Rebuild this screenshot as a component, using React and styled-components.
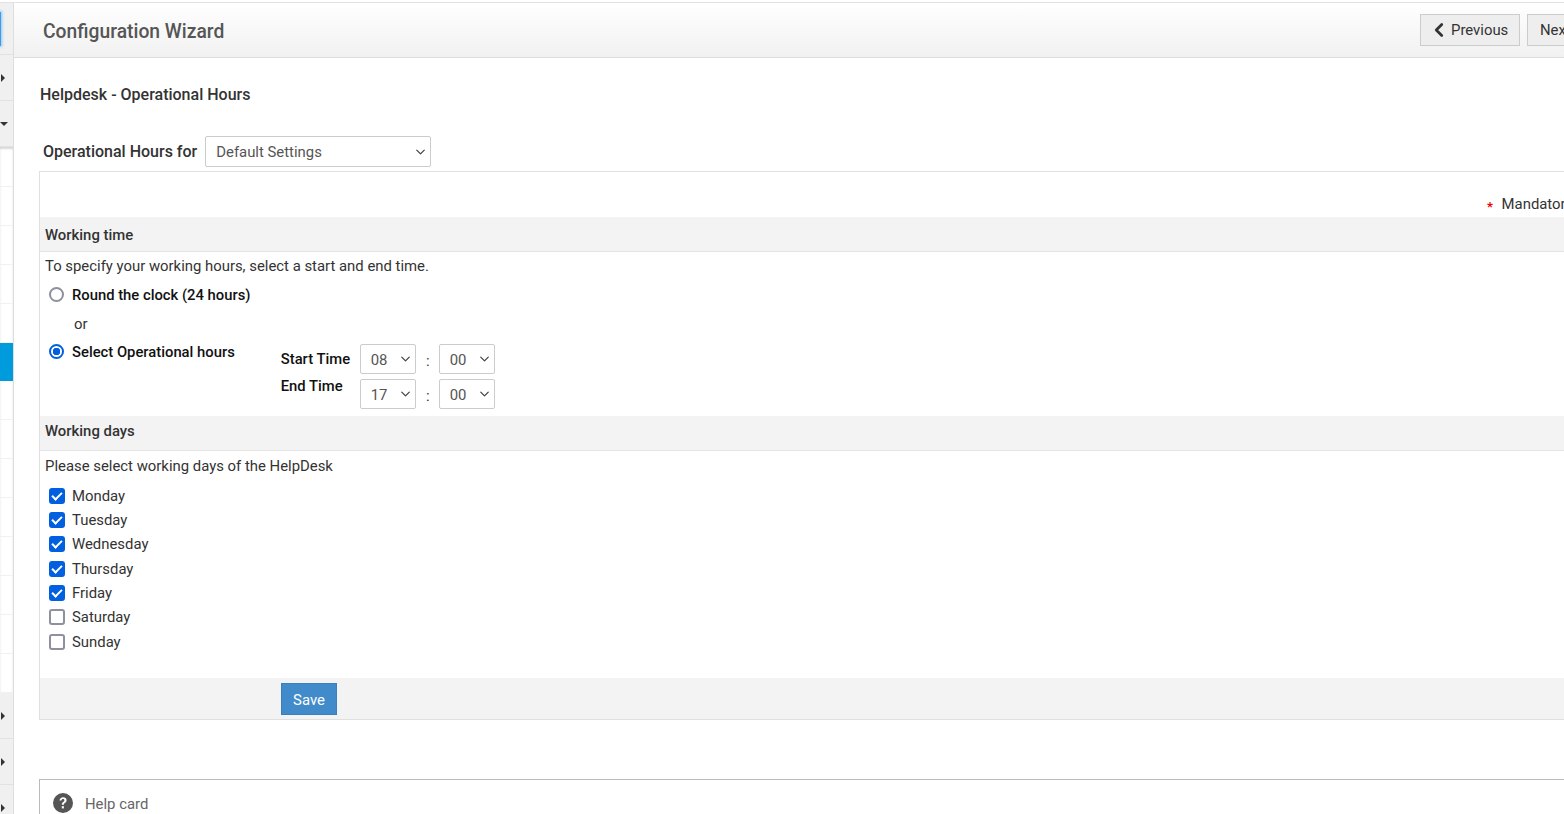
import React from 'react'
import styled, { createGlobalStyle } from 'styled-components'
import { ChevronDown, ChevronLeft } from 'lucide-react'

const GlobalStyle = createGlobalStyle`
  html, body {
    margin: 0;
    height: 100%;
    overflow: hidden;
    background: #fff;
  }
  body {
    font-family: Roboto, "Liberation Sans", sans-serif;
    font-size: 14.88px;
    color: #333;
  }
`

const days = [
  { name: 'Monday', on: true, after: 0 },
  { name: 'Tuesday', on: true, after: 0 },
  { name: 'Wednesday', on: true, after: 1 },
  { name: 'Thursday', on: true, after: 0 },
  { name: 'Friday', on: true, after: 0 },
  { name: 'Saturday', on: false, after: 1 },
  { name: 'Sunday', on: false, after: 0 },
]

const Picker = ({ value, wide }) => (
  <SelectWrap $wide={wide}>
    <Select defaultValue={value} $wide={wide}>
      <option>{value}</option>
    </Select>
    <Chevron><ChevronDown size={15} strokeWidth={2} /></Chevron>
  </SelectWrap>
)

const App = () => {
  return (
    <Page>
      <GlobalStyle />
      <Sidebar>
        <SideTop><Accent /></SideTop>
        <SideGrey><CaretRight /></SideGrey>
        <SideGrey><CaretDown /></SideGrey>
        <SideList>
          {Array.from({ length: 5 }).map((_, i) => <SideRow key={i} />)}
          <SideActive />
          {Array.from({ length: 8 }).map((_, i) => <SideRow key={i} />)}
        </SideList>
        <SideGrey><CaretRight /></SideGrey>
        <SideGrey><CaretRight /></SideGrey>
        <SideGrey><CaretRight /></SideGrey>
      </Sidebar>

      <Main>
        <Header>
          <Title>Configuration Wizard</Title>
          <HeaderButtons>
            <NavButton><ChevronLeft size={22} strokeWidth={3} /> Previous</NavButton>
            <NavButton $next>Next</NavButton>
          </HeaderButtons>
        </Header>

        <Content>
          <Heading>Helpdesk - Operational Hours</Heading>
          <ForRow>
            <ForLabel>Operational Hours for</ForLabel>
            <Picker value="Default Settings" wide />
          </ForRow>

          <Box>
            <MandatoryRow><Star>*</Star> Mandatory</MandatoryRow>

            <SectionHeader $line={37}>Working time</SectionHeader>
            <TimeBody>
              <Hint>To specify your working hours, select a start and end time.</Hint>
              <OptionRow>
                <Radio name="hours" />
                <RadioLabel>Round the clock (24 hours)</RadioLabel>
              </OptionRow>
              <Or>or</Or>
              <HoursRow>
                <OptionRow>
                  <Radio name="hours" defaultChecked />
                  <RadioLabel>Select Operational hours</RadioLabel>
                </OptionRow>
                <TimeGrid>
                  <TimeLabel>Start Time</TimeLabel>
                  <Picker value="08" />
                  <Colon>:</Colon>
                  <Picker value="00" />
                  <TimeLabel $end>End Time</TimeLabel>
                  <Picker value="17" />
                  <Colon>:</Colon>
                  <Picker value="00" />
                </TimeGrid>
              </HoursRow>
            </TimeBody>

            <SectionHeader $line={31}>Working days</SectionHeader>
            <DaysBody>
              <DaysHint>Please select working days of the HelpDesk</DaysHint>
              {days.map((d) => (
                <DayRow key={d.name} $after={d.after}>
                  <Check defaultChecked={d.on} />
                  <DayName>{d.name}</DayName>
                </DayRow>
              ))}
            </DaysBody>

            <SaveBar><SaveButton>Save</SaveButton></SaveBar>
          </Box>

          <HelpCard>
            <HelpIcon viewBox="0 0 20 20">
              <circle cx="10" cy="10" r="10" fill="#555" />
              <path d="M6.500 7.600c.1-2.100 1.600-3.400 3.600-3.400 2.100 0 3.500 1.300 3.500 3 0 1.300-.7 2-1.700 2.700-.8.5-1 .9-1 1.800H8.800c0-1.400.4-2.100 1.400-2.800.8-.5 1.200-.9 1.200-1.600 0-.8-.6-1.300-1.400-1.300-.9 0-1.500.6-1.600 1.600z" fill="#fff" />
              <rect x="8.800" y="13.200" width="2.100" height="2.200" fill="#fff" />
            </HelpIcon>
            <HelpText>Help card</HelpText>
          </HelpCard>
        </Content>
      </Main>
    </Page>
  )
}

const Page = styled.div`
  display: flex;
  width: 1564px;
  height: 812px;
  overflow: hidden;
  border-top: 1px solid #e2e2e2;
  margin-top: 2px;
  box-sizing: border-box;
`

const Sidebar = styled.div`
  width: 13px;
  flex: none;
  display: flex;
  flex-direction: column;
  border-right: 1px solid #dedede;
`

const SideTop = styled.div`
  height: 52px;
  flex: none;
  background: #f0f0f0;
  border-bottom: 1px solid #e2e2e2;
  box-sizing: border-box;
  padding-top: 9px;
`

const Accent = styled.div`
  width: 1px;
  height: 34px;
  background: #3d9be9;
  box-shadow: 0 0 3px 1px #8cc4f3;
`

const SideGrey = styled.div`
  height: 46px;
  flex: none;
  box-sizing: border-box;
  background: #f0f0f0;
  border-bottom: 1px solid #e2e2e2;
  display: flex;
  align-items: center;
`

const CaretRight = styled.span`
  width: 0;
  height: 0;
  border-top: 4px solid transparent;
  border-bottom: 4px solid transparent;
  border-left: 4px solid #333;
  margin-left: 1px;
`

const CaretDown = styled.span`
  width: 0;
  height: 0;
  border-left: 4px solid transparent;
  border-right: 4px solid transparent;
  border-top: 4px solid #333;
`

const SideList = styled.div`
  height: 546px;
  flex: none;
  box-sizing: border-box;
  padding-top: 1px;
  display: flex;
  flex-direction: column;
  box-shadow: inset 0 2px 2px #d8d8d8;
  overflow: hidden;
`

const SideRow = styled.div`
  height: 39px;
  flex: none;
  box-sizing: border-box;
  border-bottom: 1px solid #f1f1f1;
`

const SideActive = styled.div`
  height: 38px;
  flex: none;
  background: #009bdd;
`

const Main = styled.div`
  flex: 1;
  min-width: 0;
`

const Header = styled.div`
  height: 55px;
  box-sizing: border-box;
  display: flex;
  align-items: center;
  justify-content: space-between;
  padding-left: 29px;
  background: linear-gradient(#fff, #f1f1f1);
  border-bottom: 1px solid #dcdcdc;
`

const Title = styled.div`
  font-size: 19.3px;
  font-weight: 500;
  color: #555;
  margin-top: 2px;
`

const HeaderButtons = styled.div`
  display: flex;
  gap: 7px;
  width: 144px;
  flex: none;
  overflow: hidden;
  margin-top: -1px;
`

const NavButton = styled.button`
  display: flex;
  align-items: center;
  gap: 1px;
  flex: none;
  height: 32px;
  width: ${(p) => (p.$next ? '60px' : '100px')};
  padding: 1px 0 0 ${(p) => (p.$next ? '12px' : '7px')};
  border: 1px solid #ccc;
  background: #eee;
  color: #333;
  font-family: inherit;
  font-size: 14.88px;
`

const Content = styled.div`
  padding: 0 0 0 25px;
  width: 1600px;
`

const Heading = styled.div`
  margin: 27px 0 0 1px;
  font-size: 16px;
  font-weight: 500;
  line-height: 20px;
  color: #333;
`

const ForRow = styled.div`
  display: flex;
  align-items: center;
  gap: 8px;
  margin-top: 31px;
  padding-left: 4px;
`

const ForLabel = styled.label`
  font-size: 16px;
  font-weight: 500;
  color: #333;
`

const SelectWrap = styled.div`
  position: relative;
  width: ${(p) => (p.$wide ? '226px' : '56px')};
`

const Select = styled.select`
  appearance: none;
  width: 100%;
  height: ${(p) => (p.$wide ? '31px' : '30px')};
  display: block;
  padding: ${(p) => (p.$wide ? '0' : '2px')} 0 0 10px;
  border: 1px solid #ccc;
  border-radius: 2px;
  background: #fff;
  color: #555;
  font-family: inherit;
  font-size: 14.88px;
`

const Chevron = styled.span`
  position: absolute;
  right: 3px;
  top: 50%;
  transform: translateY(-50%);
  color: #444;
  pointer-events: none;
  line-height: 0;
`

const Box = styled.div`
  margin-top: 4px;
  border: 1px solid #e0e0e0;
  border-right: none;
`

const MandatoryRow = styled.div`
  height: 45px;
  box-sizing: border-box;
  padding: 23px 0 0 1447px;
  line-height: 18px;
  white-space: nowrap;
  color: #333;
`

const Star = styled.span`
  color: #e00;
  margin-right: 5px;
  font-size: 13px;
  font-weight: 700;
  vertical-align: -2px;
`

const SectionHeader = styled.div`
  height: 35px;
  box-sizing: border-box;
  padding-left: 5px;
  line-height: ${(p) => p.$line}px;
  font-weight: 500;
  background: #f3f3f3;
  border-bottom: 1px solid #e4e4e4;
`

const TimeBody = styled.div`
  height: 164px;
  padding: 5px 0 0 5px;
  box-sizing: border-box;
`

const Hint = styled.div`
  line-height: 18px;
`

const OptionRow = styled.div`
  display: flex;
  align-items: center;
  height: 20px;
  margin-top: 9px;
  padding-left: 4px;
`

const Radio = styled.input.attrs({ type: 'radio' })`
  appearance: none;
  box-sizing: border-box;
  width: 15px;
  height: 15px;
  margin: 0 8px 0 0;
  border: 2px solid #8f8f9d;
  border-radius: 50%;
  background: #fff;

  &:checked {
    border-color: #0060df;
    background: radial-gradient(circle, #0060df 0 3.5px, #fff 4px);
  }
`

const RadioLabel = styled.label`
  font-size: 14.8px;
  font-weight: 500;
  color: #111;
  padding-top: 1px;
`

const Or = styled.div`
  margin: 10px 0 0 29px;
  padding-top: 1px;
  height: 17px;
  line-height: 18px;
`

const HoursRow = styled.div`
  display: flex;
`

const TimeGrid = styled.div`
  display: grid;
  grid-template-columns: 79px 56px 23px 56px;
  grid-auto-rows: 30px;
  row-gap: 5px;
  align-items: center;
  margin: 12px 0 0 46px;
`

const TimeLabel = styled.div`
  font-size: 14.8px;
  font-weight: 500;
  color: #111;
  margin-top: ${(p) => (p.$end ? '-16px' : '0')};
`

const Colon = styled.div`
  text-align: center;
  padding: 3px 0 0 1px;
`

const DaysBody = styled.div`
  height: 227px;
  box-sizing: border-box;
  padding: 6px 0 0 5px;
`

const DaysHint = styled.div`
  line-height: 18px;
  margin-bottom: 9px;
`

const DayRow = styled.div`
  display: flex;
  align-items: center;
  height: 24px;
  padding-left: 4px;
  margin-bottom: ${(p) => p.$after}px;
`

const Check = styled.input.attrs({ type: 'checkbox' })`
  appearance: none;
  box-sizing: border-box;
  position: relative;
  width: 16px;
  height: 16px;
  margin: 0 7px 0 0;
  border: 2px solid #8f8f9d;
  border-radius: 3px;
  background: #fff;

  &:checked {
    border-color: #0060df;
    background: #0060df;
  }

  &:checked::after {
    content: '';
    position: absolute;
    left: 3px;
    top: 0;
    width: 4px;
    height: 8px;
    border: solid #fff;
    border-width: 0 2px 2px 0;
    transform: rotate(45deg);
  }
`

const DayName = styled.label``

const SaveBar = styled.div`
  height: 41px;
  background: #f3f3f3;
  padding: 5px 0 0 241px;
  box-sizing: border-box;
`

const SaveButton = styled.button`
  width: 56px;
  height: 32px;
  border: 1px solid #3a7fbe;
  background: #428bca;
  color: #fff;
  font-family: inherit;
  font-size: 14.88px;
  padding: 1px 0 0;
`

const HelpCard = styled.div`
  margin-top: 59px;
  border: 1px solid #bbb;
  border-right: none;
  height: 80px;
  display: flex;
  align-items: flex-start;
  padding: 13px 0 0 13px;
  box-sizing: border-box;
`

const HelpIcon = styled.svg`
  width: 20px;
  height: 20px;
  margin-right: 12px;
`

const HelpText = styled.div`
  line-height: 23px;
  color: #666;
`

export default App
